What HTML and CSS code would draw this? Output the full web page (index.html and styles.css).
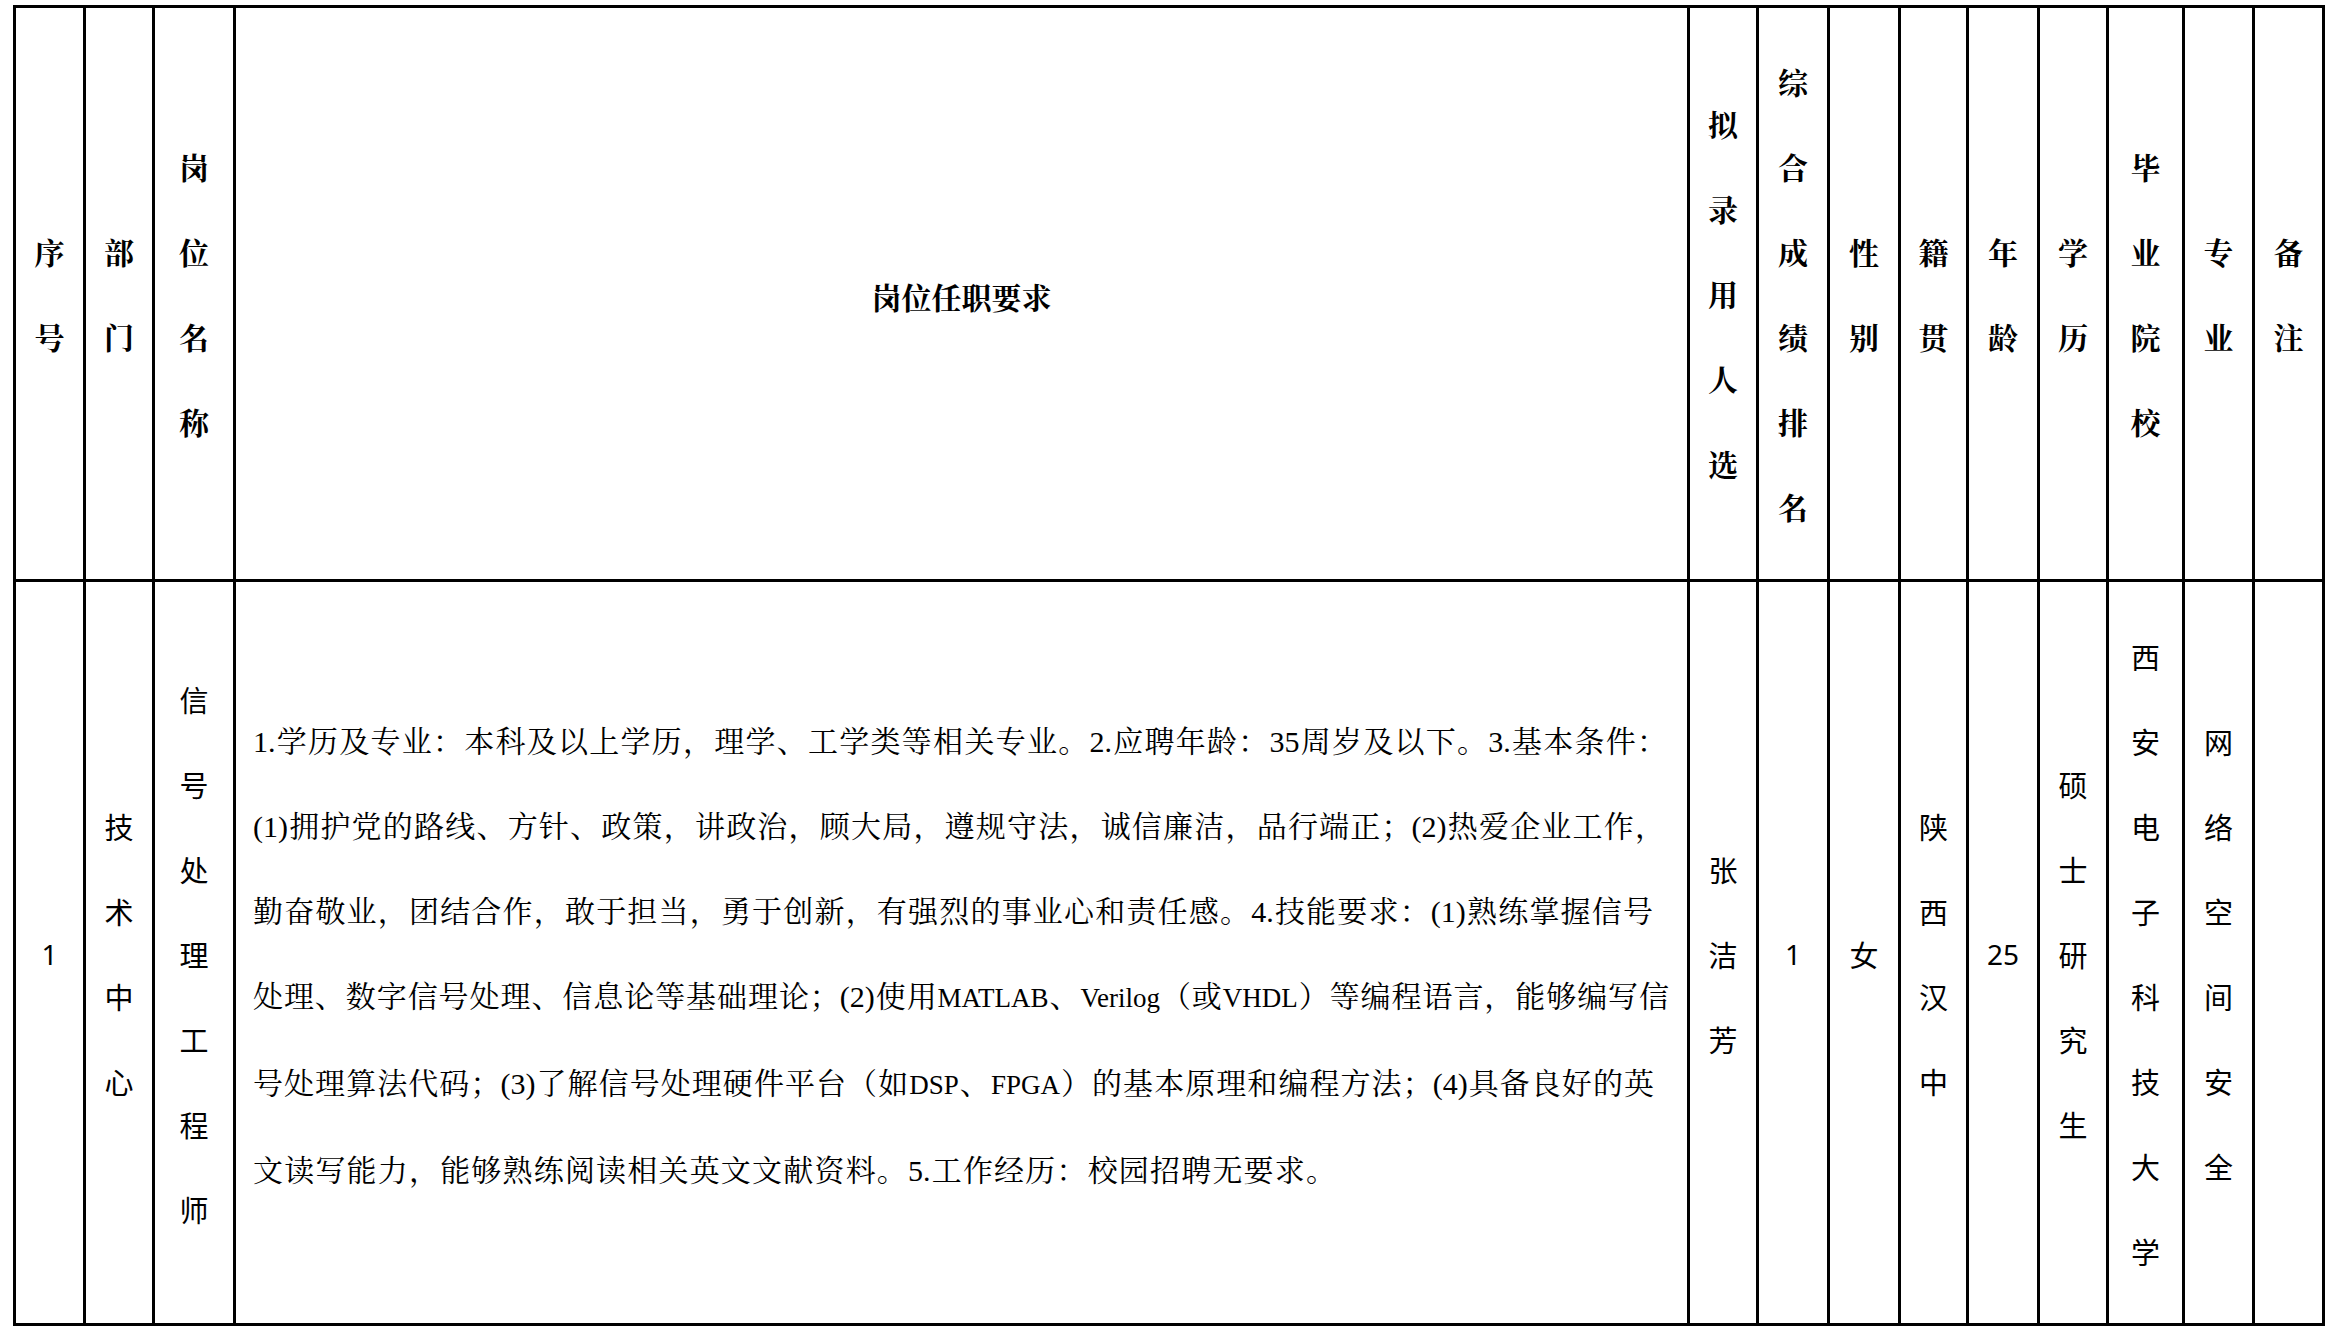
FILE: index.html
```html
<!DOCTYPE html>
<html lang="zh-CN">
<head>
<meta charset="utf-8">
<title>拟录用人选公示</title>
<link rel="stylesheet" href="styles.css">
</head>
<body>
<table class="sheet">
  <thead>
    <tr class="head-row">
      <th class="c-no"><span class="v">序号</span></th>
      <th class="c-dept"><span class="v">部门</span></th>
      <th class="c-post"><span class="v">岗位名称</span></th>
      <th class="c-req">岗位任职要求</th>
      <th class="c-name"><span class="v">拟录用人选</span></th>
      <th class="c-rank"><span class="v">综合成绩排名</span></th>
      <th class="c-sex"><span class="v">性别</span></th>
      <th class="c-home"><span class="v">籍贯</span></th>
      <th class="c-age"><span class="v">年龄</span></th>
      <th class="c-edu"><span class="v">学历</span></th>
      <th class="c-school"><span class="v">毕业院校</span></th>
      <th class="c-major"><span class="v">专业</span></th>
      <th class="c-note"><span class="v">备注</span></th>
    </tr>
  </thead>
  <tbody>
    <tr class="body-row">
      <td class="num">1</td>
      <td><span class="v">技术中心</span></td>
      <td><span class="v">信号处理工程师</span></td>
      <td class="req">
        <span class="ln l1">1.学历及专业：本科及以上学历，理学、工学类等相关专业。2.应聘年龄：35周岁及以下。3.基本条件：</span>
        <span class="ln l2">(1)拥护党的路线、方针、政策，讲政治，顾大局，遵规守法，诚信廉洁，品行端正；(2)热爱企业工作，</span>
        <span class="ln l3">勤奋敬业，团结合作，敢于担当，勇于创新，有强烈的事业心和责任感。4.技能要求：(1)熟练掌握信号</span>
        <span class="ln l4">处理、数字信号处理、信息论等基础理论；(2)使用<span class="en">MATLAB</span>、<span class="en">Verilog</span>（或<span class="en">VHDL</span>）等编程语言，能够编写信</span>
        <span class="ln l5">号处理算法代码；(3)了解信号处理硬件平台（如<span class="en">DSP</span>、<span class="en">FPGA</span>）的基本原理和编程方法；(4)具备良好的英</span>
        <span class="ln l6">文读写能力，能够熟练阅读相关英文文献资料。5.工作经历：校园招聘无要求。</span>
      </td>
      <td><span class="v">张洁芳</span></td>
      <td class="num">1</td>
      <td><span class="v">女</span></td>
      <td><span class="v">陕西汉中</span></td>
      <td class="num">25</td>
      <td><span class="v">硕士研究生</span></td>
      <td><span class="v">西安电子科技大学</span></td>
      <td><span class="v">网络空间安全</span></td>
      <td></td>
    </tr>
  </tbody>
</table>
</body>
</html>
```
FILE: styles.css
```css
html, body {
  margin: 0;
  padding: 0;
  background: #ffffff;
  color: #000000;
}

body {
  font-family: "Noto Sans CJK SC", sans-serif;
}

.sheet {
  margin: 5px 0 0 13px;
  width: 2312px;
  table-layout: fixed;
  border-collapse: separate;
  border-spacing: 0;
  border-left: 3px solid #000;
  border-top: 3px solid #000;
}

.sheet th,
.sheet td {
  box-sizing: border-box;
  padding: 0;
  border-right: 3px solid #000;
  border-bottom: 3px solid #000;
  text-align: center;
  vertical-align: middle;
  text-spacing-trim: space-all;
}

.head-row { height: 574px; }
.body-row { height: 744px; }

.sheet th {
  padding-top: 4px;
  font-family: "Liberation Serif", "Noto Serif CJK SC", "Noto Sans CJK SC", serif;
  font-weight: 700;
  font-size: 30px;
}

.sheet td {
  padding-top: 3px;
  font-family: "Noto Sans CJK SC", sans-serif;
  font-size: 29px;
  font-weight: 400;
}

.c-no { width: 70px; }
.c-dept { width: 69px; }
.c-post { width: 81px; }
.c-req { width: 1454px; }
.c-name { width: 69px; }
.c-rank { width: 71px; }
.c-sex { width: 71px; }
.c-home { width: 68px; }
.c-age { width: 71px; }
.c-edu { width: 69px; }
.c-school { width: 76px; }
.c-major { width: 70px; }
.c-note { width: 70px; }

.v {
  display: inline-block;
  width: 1.2em;
  line-height: 85px;
  word-break: break-all;
  vertical-align: middle;
}

.sheet td.num {
  font-family: "Noto Sans", "Open Sans", sans-serif;
  font-size: 28px;
}

.sheet td.req {
  text-align: left;
  padding: 6px 0 0 17px;
  font-family: "Liberation Serif", "Noto Serif CJK SC", "Noto Sans CJK SC", serif;
  font-size: 30px;
}

.ln {
  display: block;
  line-height: 85px;
  text-align: justify;
  text-align-last: justify;
}

.l1 { width: 1414px; }
.l2 { width: 1412px; }
.l3 { width: 1400px; }
.l4 { width: 1416px; }
.l5 { width: 1401px; }
.l6 { width: 1083px; }

.en {
  font-size: 27px;
}
```
